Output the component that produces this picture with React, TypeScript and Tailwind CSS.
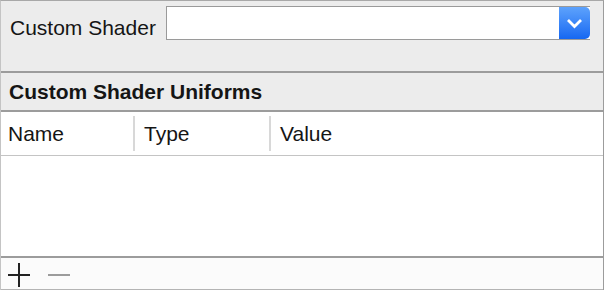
import React from 'react';

const font = { fontFamily: '"Liberation Sans", Arial, sans-serif' };

function ChevronButton() {
  return (
    <div className="flex h-full w-[31px] items-center justify-center rounded-r-[5px] bg-gradient-to-b from-[#5da2fc] to-[#1567f2]">
      <svg width="17" height="11" viewBox="0 0 17 11">
        <path d="M2 2 L8.5 8.5 L15 2" fill="none" stroke="#fff" strokeWidth="2.8" />
      </svg>
    </div>
  );
}

export default function App() {
  return (
    <div
      className="flex h-[290px] w-[604px] flex-col border-t border-r border-l border-t-[#a8a8a8] border-r-[#9c9c9c] border-l-[#c4c4c4] text-[#151515]"
      style={font}
    >
      <div className="flex h-[70px] items-start bg-[#ececec] pl-[9px] pt-[5px]">
        <span className="mt-[10px] text-[21px] leading-[24px]">Custom Shader</span>
        <div className="ml-[10px] flex h-[34px] w-[424px] items-stretch border border-[#9a9a9a] border-r-0 bg-white">
          <div className="flex-1" />
          <ChevronButton />
        </div>
      </div>
      <div className="h-[2px] bg-[#9c9c9c]" />
      <div className="flex h-[37px] items-center bg-[#ececec] pl-[8px] pt-[1px]">
        <span className="text-[21px] font-bold">Custom Shader Uniforms</span>
      </div>
      <div className="h-[2px] bg-[#9c9c9c]" />
      <div className="flex h-[43px] items-center bg-white text-[21px]">
        <div className="w-[132px] pl-[7px]">Name</div>
        <div className="h-[35px] w-[2px] bg-[#d8d8d8]" />
        <div className="w-[134px] pl-[9px]">Type</div>
        <div className="h-[35px] w-[2px] bg-[#d8d8d8]" />
        <div className="pl-[9px]">Value</div>
      </div>
      <div className="h-px bg-[#c4c4c4]" />
      <div className="h-[100px] bg-white" />
      <div className="h-[2px] bg-[#9c9c9c]" />
      <div className="flex h-[32px] items-start gap-[18px] border-b border-[#b4b4b4] bg-[#fbfbfb] pl-[7px] pt-[5px]">
        <svg width="22" height="24" viewBox="0 0 22 24">
          <path d="M11 0 V24 M0 12 H22" stroke="#222" strokeWidth="2" />
        </svg>
        <svg width="22" height="24" viewBox="0 0 22 24">
          <path d="M0 12 H22" stroke="#9c9c9c" strokeWidth="2" />
        </svg>
      </div>
    </div>
  );
}
